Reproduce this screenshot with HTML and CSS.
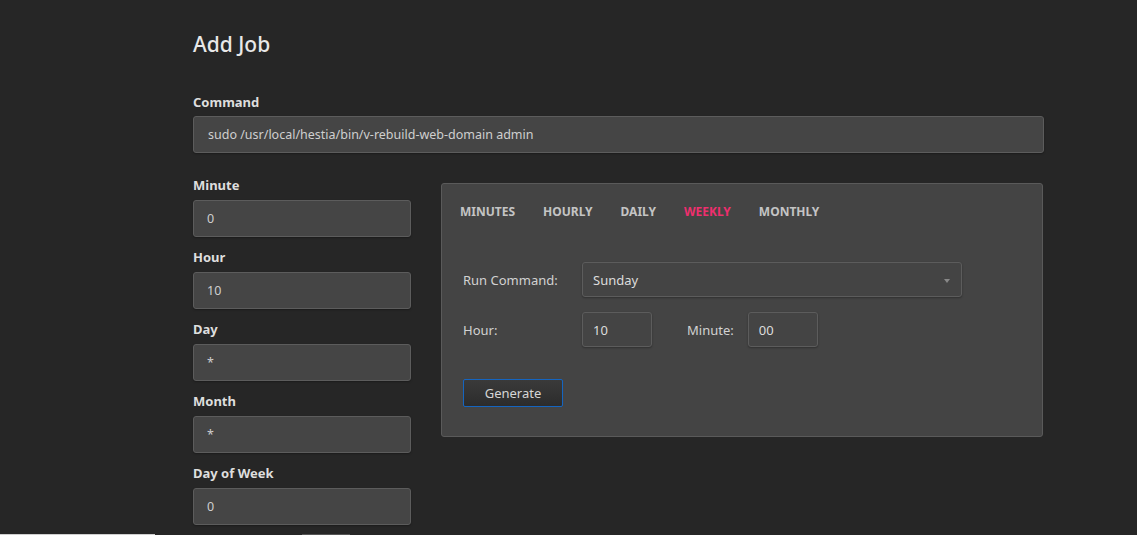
FILE: index.html
```html
<!DOCTYPE html>
<html>
<head>
<meta charset="utf-8">
<link rel="stylesheet" href="styles.css">
</head>
<body>
<main class="page">
  <h1 class="title">Add Job</h1>
  <div class="field">
    <label class="label">Command</label>
    <div class="input wide">sudo /usr/local/hestia/bin/v-rebuild-web-domain admin</div>
  </div>
  <div class="row">
    <div class="col">
      <div class="field small"><label class="label">Minute</label><div class="input">0</div></div>
      <div class="field small"><label class="label">Hour</label><div class="input">10</div></div>
      <div class="field small"><label class="label">Day</label><div class="input">*</div></div>
      <div class="field small"><label class="label">Month</label><div class="input">*</div></div>
      <div class="field small"><label class="label">Day of Week</label><div class="input">0</div></div>
    </div>
    <div class="panel">
      <nav class="tabs">
        <span class="tab">MINUTES</span>
        <span class="tab">HOURLY</span>
        <span class="tab">DAILY</span>
        <span class="tab active">WEEKLY</span>
        <span class="tab">MONTHLY</span>
      </nav>
      <div class="prow">
        <span class="plabel">Run Command:</span>
        <div class="pinput select">Sunday<span class="caret"></span></div>
      </div>
      <div class="prow">
        <span class="plabel">Hour:</span>
        <div class="pinput short">10</div>
        <span class="plabel mlabel">Minute:</span>
        <div class="pinput short">00</div>
      </div>
      <button class="btn">Generate</button>
    </div>
  </div>
</main>
<div class="bottombar"><span class="seg1"></span><span class="seg2"></span></div>
</body>
</html>
```

FILE: styles.css
```css
html, body { margin: 0; padding: 0; }
body {
  background: #262626;
  color: #ddd;
  font-family: "Noto Sans", "Open Sans", sans-serif;
  height: 535px;
  overflow: hidden;
}
.page {
  padding: 29px 0 0 193px;
  width: 851px;
}
.title {
  margin: 0 0 34px;
  font-size: 21px;
  font-weight: 500;
  color: #e8e8e8;
  line-height: 30px;
}
.field { display: flex; flex-direction: column; }
.label {
  font-size: 13px;
  font-weight: 700;
  color: #dedede;
  line-height: 18px;
  margin-bottom: 5px;
}
.input {
  box-sizing: border-box;
  height: 37px;
  background: #454545;
  border: 1px solid #5c5c5c;
  border-radius: 3px;
  box-shadow: 0 1px 2px rgba(0,0,0,0.3);
  color: #cfcfcf;
  font-size: 12.5px;
  padding: 0 13px;
  display: flex;
  align-items: center;
}
.wide { width: 851px; padding-left: 14px; }
.row {
  display: flex;
  gap: 30px;
  margin-top: 22px;
}
.col { width: 218px; display: flex; flex-direction: column; gap: 11px; margin-top: 1px; }
.small .label { margin-bottom: 6px; }
.panel {
  box-sizing: border-box;
  width: 602px;
  height: 254px;
  margin-top: 8px;
  background: #444;
  border: 1px solid #5a5a5a;
  border-radius: 3px;
  padding: 19px 0 0 18px;
}
.tabs { display: flex; gap: 28px; }
.tab {
  font-size: 12px;
  font-weight: 700;
  color: #c4c4c4;
  line-height: 18px;
}
.tab.active { color: #ee2f6e; }
.prow {
  display: flex;
  align-items: center;
  margin-left: 3px;
}
.tabs + .prow { margin-top: 41px; }
.prow + .prow { margin-top: 15px; }
.plabel {
  width: 119px;
  font-size: 13px;
  color: #d2d2d2;
}
.mlabel { width: auto; margin: 0 14px 0 35px; }
.pinput {
  box-sizing: border-box;
  height: 35px;
  border: 1px solid #5c5c5c;
  border-radius: 3px;
  box-shadow: 0 1px 2px rgba(0,0,0,0.3);
  background: #444;
  color: #dcdcdc;
  font-size: 13px;
  padding: 0 10px;
  display: flex;
  align-items: center;
}
.select { width: 380px; position: relative; }
.caret {
  position: absolute;
  right: 11px;
  top: 16px;
  border-left: 3px solid transparent;
  border-right: 3px solid transparent;
  border-top: 4px solid #888;
}
.short { width: 70px; }
.btn {
  margin: 32px 0 0 3px;
  width: 100px;
  height: 28px;
  border: 1px solid #1565c0;
  border-radius: 2px;
  background: linear-gradient(#3a3a3a, #2c2c2c);
  color: #d6d6d6;
  font-family: inherit;
  font-size: 13px;
  display: block;
}
.bottombar {
  position: fixed;
  left: 0;
  bottom: 0;
  width: 100%;
  height: 1px;
}
.seg1 { position: absolute; left: 0; width: 155px; height: 1px; background: #cfcfcf; }
.seg2 { position: absolute; left: 302px; width: 48px; height: 1px; background: #555; }
```
